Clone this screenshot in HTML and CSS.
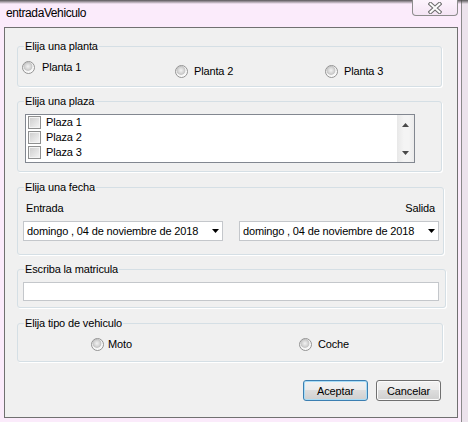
FILE: index.html
```html
<!DOCTYPE html>
<html>
<head>
<meta charset="utf-8">
<link rel="stylesheet" href="styles.css">
</head>
<body>
<div class="window">
  <div class="titlebar">
    <span class="title">entradaVehiculo</span>
    <div class="close">
      <svg width="14" height="12" viewBox="0 0 14 12">
        <path d="M2.5 2 L11.5 10 M11.5 2 L2.5 10" stroke="#6f6f6f" stroke-width="4.2" stroke-linecap="square"/>
        <path d="M2.5 2 L11.5 10 M11.5 2 L2.5 10" stroke="#fdfdfd" stroke-width="2" stroke-linecap="square"/>
      </svg>
    </div>
  </div>
  <div class="client">
    <fieldset class="group g1">
      <legend>Elija una planta</legend>
      <div class="radios radios-planta">
        <label class="radio r-p1"><span class="dot"></span>Planta 1</label>
        <label class="radio r-p2"><span class="dot"></span>Planta 2</label>
        <label class="radio r-p3"><span class="dot"></span>Planta 3</label>
      </div>
    </fieldset>

    <fieldset class="group g2">
      <legend>Elija una plaza</legend>
      <div class="listbox">
        <div class="items">
          <div class="item"><span class="check"></span>Plaza 1</div>
          <div class="item"><span class="check"></span>Plaza 2</div>
          <div class="item"><span class="check"></span>Plaza 3</div>
        </div>
        <div class="scrollbar">
          <svg width="7" height="4" viewBox="0 0 7 4"><polygon points="3.5,0 7,4 0,4" fill="#4a4a4a"/></svg>
          <svg width="7" height="4" viewBox="0 0 7 4"><polygon points="0,0 7,0 3.5,4" fill="#4a4a4a"/></svg>
        </div>
      </div>
    </fieldset>

    <fieldset class="group g3">
      <legend>Elija una fecha</legend>
      <div class="fecha">
        <div class="labels"><span>Entrada</span><span>Salida</span></div>
        <div class="pickers">
          <div class="picker"><span>domingo , 04 de noviembre de 2018</span>
            <svg class="drop" width="7" height="4" viewBox="0 0 7 4"><polygon points="0,0 7,0 3.5,4" fill="#000"/></svg></div>
          <div class="picker"><span>domingo , 04 de noviembre de 2018</span>
            <svg class="drop" width="7" height="4" viewBox="0 0 7 4"><polygon points="0,0 7,0 3.5,4" fill="#000"/></svg></div>
        </div>
      </div>
    </fieldset>

    <fieldset class="group g4">
      <legend>Escriba la matricula</legend>
      <div class="textbox"></div>
    </fieldset>

    <fieldset class="group g5">
      <legend>Elija tipo de vehiculo</legend>
      <div class="radios radios-tipo">
        <label class="radio r-moto"><span class="dot"></span>Moto</label>
        <label class="radio r-coche"><span class="dot"></span>Coche</label>
      </div>
    </fieldset>

    <div class="buttons">
      <button class="btn btn-default">Aceptar</button>
      <button class="btn">Cancelar</button>
    </div>
  </div>
</div>
</body>
</html>
```

FILE: styles.css
```css
* { box-sizing: border-box; }

body {
  margin: 0;
  font-family: "Liberation Sans", Arial, sans-serif;
  font-size: 11px;
  letter-spacing: -0.15px;
  color: #000;
}

.window {
  width: 468px;
  height: 422px;
  overflow: hidden;
  background:
    linear-gradient(to bottom, rgba(70,70,70,0.9), rgba(70,70,70,0) 4px),
    linear-gradient(to right, transparent 461px, #8a8a8a 461px, #8a8a8a 462px, #ece3ec 462px),
    #fbebfb;
}

.titlebar {
  height: 27px;
  display: flex;
  align-items: flex-start;
}

.title {
  margin: 6px 0 0 6px;
  font-size: 12px;
  line-height: 15px;
  letter-spacing: -0.4px;
}

.close {
  margin-left: auto;
  margin-right: 10px;
  width: 46px;
  height: 16px;
  border: 1px solid #8c8c8c;
  border-top: none;
  border-radius: 0 0 4px 4px;
  background: linear-gradient(#fdf4fd, #f4e4f4);
  display: flex;
  align-items: center;
  justify-content: center;
}

.client {
  margin-left: 4px;
  width: 454px;
  height: 391px;
  border: 1px solid #707070;
  background: #f0f0f0;
  display: flex;
  flex-direction: column;
  align-items: flex-start;
}

.group {
  margin: 0 0 0 12px;
  padding: 0;
  min-width: 0;
  border: 1px solid #d5dfe5;
  border-radius: 3px;
  box-shadow: 1px 1px 0 #ffffff;
}

.group legend {
  margin-left: 6px;
  padding: 0 1px;
  height: 14px;
  line-height: 14px;
}

.g1 { width: 425px; height: 48px; margin-top: 11px; }
.g2 { width: 425px; height: 78px; margin-top: 7px; }
.g3 { width: 427px; height: 75px; margin-top: 8px; }
.g4 { width: 429px; height: 46px; margin-top: 7px; }
.g5 { width: 426px; height: 46px; margin-top: 8px; }

/* radios */
.radios { display: grid; align-items: start; }
.radios-planta { grid-template-columns: 153px 150px auto; padding-left: 4px; }
.radios-tipo { grid-template-columns: 208px auto; padding-left: 73px; margin-top: 8px; }

.radio {
  display: flex;
  align-items: center;
  height: 13px;
  line-height: 13px;
  white-space: nowrap;
}
.r-p1 { margin-top: 8px; gap: 7px; }
.r-p2 { margin-top: 12px; gap: 6px; }
.r-p3 { margin-top: 12px; gap: 6px; }
.r-moto { gap: 4px; }
.r-coche { gap: 6px; }

.dot {
  flex: none;
  width: 13px;
  height: 13px;
  border-radius: 50%;
  border: 1px solid #939393;
  background: radial-gradient(circle at 45% 40%, #f2f2f2 0, #d9d9d9 2.5px, #c6c6c6 4px, #f3f3f3 4.8px, #fbfbfb 6px);
}

/* listbox */
.listbox {
  margin: 6px 0 0 7px;
  width: 390px;
  height: 49px;
  border: 1px solid #828790;
  background: #fff;
  display: flex;
}
.items { flex: 1; padding-left: 2px; }
.item {
  display: flex;
  align-items: flex-start;
  gap: 5px;
  height: 15px;
  line-height: 15px;
}
.check {
  flex: none;
  margin-top: 1px;
  width: 13px;
  height: 13px;
  border: 1px solid #8e8f8f;
  background: linear-gradient(135deg, #cbcbcb, #f6f6f6);
  box-shadow: inset 0 0 0 1px #f4f4f4;
}
.scrollbar {
  width: 17px;
  display: flex;
  flex-direction: column;
  justify-content: space-between;
  align-items: center;
  padding: 8px 0 7px;
  background: linear-gradient(to right, #e8e8e8, #f4f4f4 40%, #f4f4f4 70%, #ebebeb);
}

/* dates */
.fecha { padding: 8px 4px 0 5px; }
.labels {
  display: flex;
  justify-content: space-between;
  padding: 0 4px 0 3px;
  line-height: 13px;
}
.pickers {
  display: flex;
  justify-content: space-between;
  margin-top: 6px;
}
.picker {
  width: 200px;
  height: 20px;
  border: 1px solid #c4c7cb;
  background: #fff;
  display: flex;
  align-items: center;
  padding-left: 3px;
  white-space: nowrap;
}
.picker .drop { margin-left: auto; margin-right: 3px; flex: none; }

/* textbox */
.textbox {
  margin: 6px 0 0 5px;
  width: 416px;
  height: 19px;
  border: 1px solid #c4c7cb;
  background: #fff;
}

/* buttons */
.buttons {
  align-self: flex-end;
  margin: 18px 16px 0 0;
  display: flex;
  gap: 8px;
}
.btn {
  width: 65px;
  height: 21px;
  padding: 0;
  font: inherit;
  letter-spacing: inherit;
  color: #000;
  border: 1px solid #707070;
  border-radius: 3px;
  background: linear-gradient(#f2f2f2 0, #ebebeb 50%, #dddddd 50%, #cfcfcf 100%);
  box-shadow: inset 0 0 0 1px #fbfbfb;
}
.btn-default {
  border-color: #3c7fb1;
  box-shadow: inset 0 0 0 1px #a8dcf6;
}
```
